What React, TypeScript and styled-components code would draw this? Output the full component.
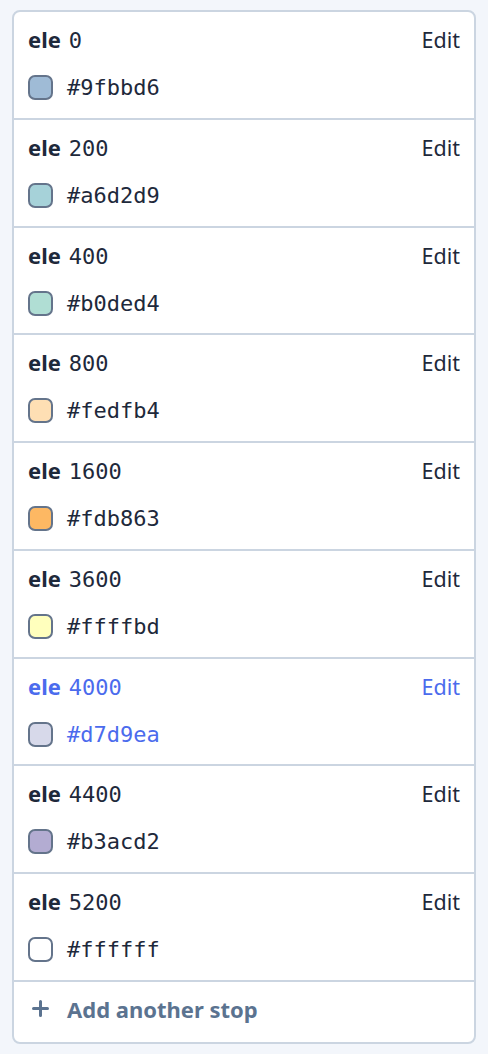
import styled, { createGlobalStyle } from 'styled-components';

// A single colour stop of the elevation ramp
interface Stop {
  elevation: number;
  color: string;
}

const stops: Stop[] = [
  { elevation: 0, color: '#9fbbd6' },
  { elevation: 200, color: '#a6d2d9' },
  { elevation: 400, color: '#b0ded4' },
  { elevation: 800, color: '#fedfb4' },
  { elevation: 1600, color: '#fdb863' },
  { elevation: 3600, color: '#ffffbd' },
  { elevation: 4000, color: '#d7d9ea' },
  { elevation: 4400, color: '#b3acd2' },
  { elevation: 5200, color: '#ffffff' },
];

const ACTIVE = 4000;

const GlobalStyle = createGlobalStyle`
  html, body {
    margin: 0;
    background: #f3f6fb;
  }
  body {
    font-family: "Noto Sans", "Open Sans", sans-serif;
    color: #1e293b;
  }
`;

const Page = styled.div`
  padding: 10px 12px;
`;

const Card = styled.div`
  background: #ffffff;
  border: 2px solid #cbd5e1;
  border-radius: 8px;
  overflow: hidden;
`;

const Row = styled.div<{ $active: boolean }>`
  height: 107.75px;
  box-sizing: border-box;
  padding: 12px 14px 0 14px;
  border-bottom: 2px solid #cbd5e1;
  color: ${(p) => (p.$active ? '#4b6bed' : '#1e293b')};
  cursor: pointer;
`;

const TopLine = styled.div`
  display: flex;
  justify-content: space-between;
  align-items: baseline;
  height: 30px;
  line-height: 30px;
`;

const Label = styled.span`
  font-size: 22px;
  font-weight: 700;
`;

const Mono = styled.span`
  font-family: "DejaVu Sans Mono", "Liberation Mono", monospace;
  font-size: 22px;
  font-weight: 400;
  margin-left: 8px;
`;

const EditLink = styled.span`
  font-size: 21.5px;
`;

const ColorLine = styled.div`
  display: flex;
  align-items: center;
  gap: 14px;
  margin-top: 21px;
`;

const Swatch = styled.span<{ $color: string }>`
  width: 21px;
  height: 21px;
  border: 2px solid #64748b;
  border-radius: 7px;
  background: ${(p) => p.$color};
`;

const HexCode = styled.span`
  font-family: "DejaVu Sans Mono", "Liberation Mono", monospace;
  font-size: 22px;
`;

const AddRow = styled.div`
  height: 60px;
  display: flex;
  align-items: center;
  gap: 18px;
  padding: 0 17px 6px 18px;
  box-sizing: border-box;
  color: #5b7390;
  font-size: 22px;
  font-weight: 700;
`;

function StopRow({ stop }: { stop: Stop }) {
  return (
    <Row $active={stop.elevation === ACTIVE}>
      <TopLine>
        <span>
          <Label>ele</Label>
          <Mono>{stop.elevation}</Mono>
        </span>
        <EditLink>Edit</EditLink>
      </TopLine>
      <ColorLine>
        <Swatch $color={stop.color} />
        <HexCode>{stop.color}</HexCode>
      </ColorLine>
    </Row>
  );
}

export default function App() {
  return (
    <Page>
      <GlobalStyle />
      <Card>
        {stops.map((s) => (
          <StopRow key={s.elevation} stop={s} />
        ))}
        <AddRow>
          <svg width="17" height="17" viewBox="0 0 17 17">
            <path d="M8.5 1.5v14M1.5 8.5h14" stroke="#5b7390" strokeWidth="3" strokeLinecap="round" />
          </svg>
          Add another stop
        </AddRow>
      </Card>
    </Page>
  );
}
